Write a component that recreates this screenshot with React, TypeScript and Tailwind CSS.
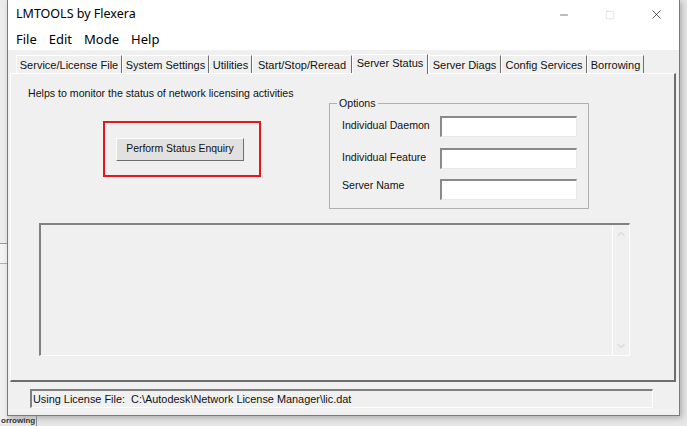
import { Minus, Square, X, ChevronUp, ChevronDown } from 'lucide-react';

const tabs = [
  { label: 'Service/License File', w: 'w-[106px]' },
  { label: 'System Settings', w: 'w-[87px]' },
  { label: 'Utilities', w: 'w-[43px]' },
  { label: 'Start/Stop/Reread', w: 'w-[100px]' },
  { label: 'Server Status', w: 'w-[76px]', active: true },
  { label: 'Server Diags', w: 'w-[73px]' },
  { label: 'Config Services', w: 'w-[86px]' },
  { label: 'Borrowing', w: 'w-[57px]' },
];

function Field() {
  return (
    <div className="w-[137px] h-[21px] bg-white border-t-2 border-l-2 border-t-[#8a8a8a] border-l-[#8a8a8a] border-b border-r border-b-[#e8e8e8] border-r-[#e8e8e8]" />
  );
}

export default function App() {
  return (
    <div
      className="w-[687px] h-[426px] bg-[#e6e6e6] flex overflow-hidden text-[#111]"
      style={{ fontFamily: '"Liberation Sans", Arial, sans-serif' }}
    >
      {/* desktop strip behind the window */}
      <div className="w-[7px] flex flex-col shrink-0">
        <div className="h-[243px] bg-[#ececec]" />
        <div className="h-px bg-[#9a9a9a]" />
        <div className="h-[19px] bg-[#f3f3f3]" />
        <div className="h-px bg-[#b0b0b0]" />
        <div className="h-[160px] bg-[#f0f0f0]" />
      </div>

      <div className="flex flex-col shrink-0">
        {/* window */}
        <div className="w-[673px] h-[416px] bg-[#f0f0f0] border border-[#7a7a7a] border-t-0 shadow-[2px_2px_6px_rgba(0,0,0,0.25)] flex flex-col">
          {/* title bar */}
          <div className="h-[29px] bg-white flex items-center pl-[8px]">
            <span className="text-[12.5px] text-black" style={{ fontFamily: '"Noto Sans", "Open Sans", sans-serif' }}>
              LMTOOLS by Flexera
            </span>
            <div className="ml-auto flex items-center h-full">
              <div className="w-[46px] flex justify-center text-[#222]">
                <Minus className="w-[12px] h-[12px]" strokeWidth={1.2} />
              </div>
              <div className="w-[46px] flex justify-center text-[#c8c8c8]">
                <Square className="w-[10px] h-[10px]" strokeWidth={1.2} />
              </div>
              <div className="w-[46px] flex justify-center text-[#222]">
                <X className="w-[15px] h-[15px]" strokeWidth={1.2} />
              </div>
            </div>
          </div>

          {/* menu bar */}
          <div className="h-[21px] bg-white flex items-center pl-[8px] gap-[12px] text-[13px] text-black" style={{ fontFamily: '"Noto Sans", "Open Sans", sans-serif' }}>
            <span>File</span>
            <span>Edit</span>
            <span>Mode</span>
            <span>Help</span>
          </div>

          {/* client area */}
          <div className="flex-1 flex flex-col px-[2px] pt-[3px] text-[11px]">
            {/* tab strip */}
            <div className="flex items-end h-[20px] pl-[6px]">
              {tabs.map((t) =>
                t.active ? (
                  <div
                    key={t.label}
                    className={`${t.w} h-[20px] -mb-px relative z-10 bg-[#f0f0f0] border-t border-l border-t-white border-l-white border-r border-r-[#6e6e6e] flex items-center justify-center pb-[2px]`}
                  >
                    {t.label}
                  </div>
                ) : (
                  <div
                    key={t.label}
                    className={`${t.w} h-[18px] border-t border-l border-t-white border-l-white border-r border-r-[#6e6e6e] flex items-center justify-center pt-px`}
                  >
                    {t.label}
                  </div>
                )
              )}
            </div>

            {/* tab panel */}
            <div className="w-[666px] h-[309px] border-t border-l border-t-white border-l-white border-r-2 border-b-2 border-r-[#6e6e6e] border-b-[#6e6e6e] flex flex-col">
              <div className="flex pl-[17px] pt-[13px]">
                <div className="flex flex-col w-[301px]">
                  <span className="leading-[13px] text-[10.6px]">Helps to monitor the status of network licensing activities</span>
                  <div className="mt-[21px] ml-[75px] w-[158px] h-[56px] border-2 border-[#e8161c] flex items-center justify-center">
                    <div className="w-[128px] h-[23px] -ml-[4px] bg-[#e1e1e1] border border-t-[#fcfcfc] border-l-[#fcfcfc] border-r-[#6e6e6e] border-b-[#6e6e6e] flex items-center justify-center text-[10.4px]">
                      Perform Status Enquiry
                    </div>
                  </div>
                </div>

                {/* options group */}
                <div className="mt-[16px] w-[260px] h-[106px] border border-[#b0b0b0] relative flex flex-col pl-[12px] pt-[11px] text-[10.6px]">
                  <span className="absolute -top-[7px] left-[7px] px-[2px] bg-[#f0f0f0] leading-[13px]">Options</span>
                  <div className="flex items-center h-[22px]">
                    <span className="w-[98px]">Individual Daemon</span>
                    <Field />
                  </div>
                  <div className="flex items-center h-[22px] mt-[10px]">
                    <span className="w-[98px]">Individual Feature</span>
                    <Field />
                  </div>
                  <div className="flex items-center h-[22px] mt-[9px]">
                    <span className="w-[98px] -mt-[6px]">Server Name</span>
                    <Field />
                  </div>
                </div>
              </div>

              {/* output area */}
              <div className="ml-[28px] mt-[14px] w-[591px] h-[133px] border-t-2 border-l-2 border-t-[#808080] border-l-[#808080] border-b border-r border-b-white border-r-white bg-[#f0f0f0] flex">
                <div className="flex-1" />
                <div className="w-[17px] border-l border-l-white flex flex-col items-center justify-between py-[3px] text-[#bcbcbc]">
                  <ChevronUp className="w-[12px] h-[12px]" strokeWidth={1.5} />
                  <ChevronDown className="w-[12px] h-[12px]" strokeWidth={1.5} />
                </div>
              </div>
            </div>

            {/* status bar */}
            <div className="ml-[20px] mt-[7px] w-[623px] h-[19px] border-t-2 border-l-2 border-t-[#808080] border-l-[#808080] border-b border-r border-b-white border-r-white flex items-center pl-px text-[10.9px]">
              Using License File:&nbsp; C:\Autodesk\Network License Manager\lic.dat
            </div>
          </div>
        </div>

        {/* desktop below */}
        <div className="flex h-[10px] items-start text-[8px] font-bold leading-[9px] text-[#333]">
          <span className="-ml-[7px] w-[36px] pl-px">orrowing</span>
          <div className="w-px h-full bg-[#888]" />
        </div>
      </div>
    </div>
  );
}
